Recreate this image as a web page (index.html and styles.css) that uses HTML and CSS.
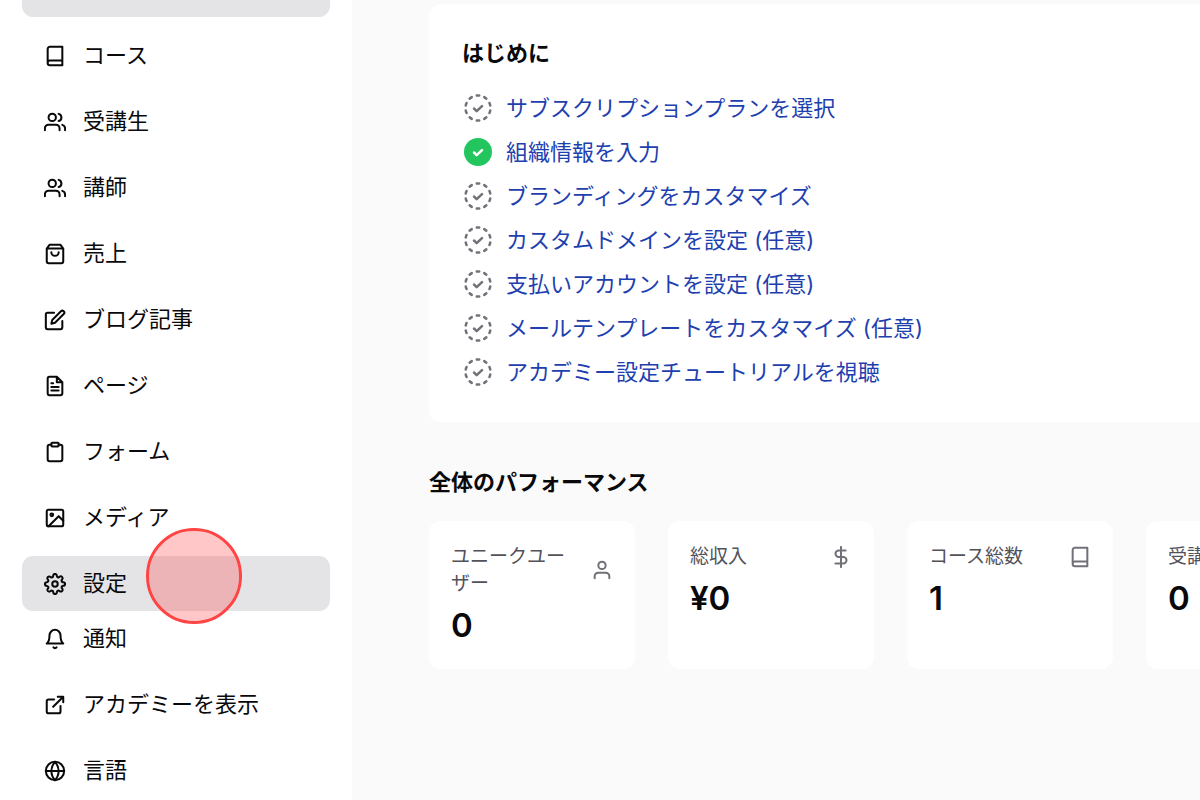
FILE: index.html
```html
<!DOCTYPE html>
<html lang="ja">
  <head>
    <meta charset="UTF-8" />
    <meta name="viewport" content="width=device-width, initial-scale=1.0" />
    <title>ダッシュボード</title>
    <link rel="stylesheet" href="styles.css">
  </head>
  <body>
    <!-- shared icons -->
    <svg class="sprite" aria-hidden="true">
      <symbol id="book" viewBox="0 0 24 24"><path d="M4 19.5v-15A2.5 2.5 0 0 1 6.5 2H20v20H6.5a2.5 2.5 0 0 1 0-5H20" /></symbol>
      <symbol id="users" viewBox="0 0 24 24"><path d="M17 21v-2a4 4 0 0 0-4-4H5a4 4 0 0 0-4 4v2M23 21v-2a4 4 0 0 0-3-3.87M16 3.13a4 4 0 0 1 0 7.75" /><circle cx="9" cy="7" r="4" /></symbol>
      <symbol id="todo" viewBox="0 0 28 28"><circle class="todo-ring" cx="14" cy="14" r="12.5" pathLength="120" /><path d="M10 14.5l2.7 2.6 5.3-5" /></symbol>
      <symbol id="done" viewBox="0 0 28 28"><circle class="done-disc" cx="14" cy="14" r="14" /><path d="M10 14.5l2.7 2.6 5.3-5" /></symbol>
    </svg>

    <div class="layout">
      <aside class="sidebar">
        <nav>
          <div class="nav-current"></div>
          <ul class="nav-list">
            <li><a class="nav-item" href="#"><svg class="icon"><use href="#book" /></svg>コース</a></li>
            <li><a class="nav-item" href="#"><svg class="icon"><use href="#users" /></svg>受講生</a></li>
            <li><a class="nav-item" href="#"><svg class="icon"><use href="#users" /></svg>講師</a></li>
            <li><a class="nav-item" href="#"><svg class="icon" viewBox="0 0 24 24"><path d="M6 2 3 6v14a2 2 0 0 0 2 2h14a2 2 0 0 0 2-2V6l-3-4ZM3 6h18M16 10a4 4 0 0 1-8 0" /></svg>売上</a></li>
            <li><a class="nav-item" href="#"><svg class="icon" viewBox="0 0 24 24"><path d="M11 4H4a2 2 0 0 0-2 2v14a2 2 0 0 0 2 2h14a2 2 0 0 0 2-2v-7" /><path d="M18.5 2.5a2.12 2.12 0 0 1 3 3L12 15l-4 1 1-4 9.5-9.5z" /></svg>ブログ記事</a></li>
            <li><a class="nav-item" href="#"><svg class="icon" viewBox="0 0 24 24"><path d="M14 2H6a2 2 0 0 0-2 2v16a2 2 0 0 0 2 2h12a2 2 0 0 0 2-2V8ZM14 2v6h6M10 9H8M16 13H8M16 17H8" /></svg>ページ</a></li>
            <li><a class="nav-item" href="#"><svg class="icon" viewBox="0 0 24 24"><rect x="8" y="2" width="8" height="4" rx="1" /><path d="M16 4h2a2 2 0 0 1 2 2v14a2 2 0 0 1-2 2H6a2 2 0 0 1-2-2V6a2 2 0 0 1 2-2h2" /></svg>フォーム</a></li>
            <li><a class="nav-item" href="#"><svg class="icon" viewBox="0 0 24 24"><rect x="3" y="3" width="18" height="18" rx="2" /><circle cx="8.5" cy="8.5" r="1.5" /><path d="M21 15l-5-5L5 21" /></svg>メディア</a></li>
            <li class="nav-target">
              <a class="nav-item active" href="#"><svg class="icon" viewBox="0 0 24 24"><circle cx="12" cy="12" r="3" /><path d="M19.4 15a1.65 1.65 0 0 0 .33 1.82l.06.06a2 2 0 0 1 0 2.83 2 2 0 0 1-2.83 0l-.06-.06a1.65 1.65 0 0 0-1.82-.33 1.65 1.65 0 0 0-1 1.51V21a2 2 0 0 1-2 2 2 2 0 0 1-2-2v-.09A1.65 1.65 0 0 0 9 19.4a1.65 1.65 0 0 0-1.82.33l-.06.06a2 2 0 0 1-2.83 0 2 2 0 0 1 0-2.83l.06-.06a1.65 1.65 0 0 0 .33-1.82 1.65 1.65 0 0 0-1.51-1H3a2 2 0 0 1-2-2 2 2 0 0 1 2-2h.09A1.65 1.65 0 0 0 4.6 9a1.65 1.65 0 0 0-.33-1.82l-.06-.06a2 2 0 0 1 0-2.83 2 2 0 0 1 2.83 0l.06.06a1.65 1.65 0 0 0 1.82.33H9a1.65 1.65 0 0 0 1-1.51V3a2 2 0 0 1 2-2 2 2 0 0 1 2 2v.09a1.65 1.65 0 0 0 1 1.51 1.65 1.65 0 0 0 1.82-.33l.06-.06a2 2 0 0 1 2.83 0 2 2 0 0 1 0 2.83l-.06.06a1.65 1.65 0 0 0-.33 1.82V9a1.65 1.65 0 0 0 1.51 1H21a2 2 0 0 1 2 2 2 2 0 0 1-2 2h-.09a1.65 1.65 0 0 0-1.51 1z" /></svg>設定</a>
              <span class="click-marker"></span>
            </li>
          </ul>
          <ul class="nav-list">
            <li><a class="nav-item" href="#"><svg class="icon" viewBox="0 0 24 24"><path d="M18 8A6 6 0 0 0 6 8c0 7-3 9-3 9h18s-3-2-3-9M13.73 21a2 2 0 0 1-3.46 0" /></svg>通知</a></li>
            <li><a class="nav-item" href="#"><svg class="icon" viewBox="0 0 24 24"><path d="M15 3h6v6M10 14 21 3M18 13v6a2 2 0 0 1-2 2H5a2 2 0 0 1-2-2V8a2 2 0 0 1 2-2h6" /></svg>アカデミーを表示</a></li>
            <li><a class="nav-item" href="#"><svg class="icon" viewBox="0 0 24 24"><circle cx="12" cy="12" r="10" /><path d="M2 12h20M12 2a15.3 15.3 0 0 1 4 10 15.3 15.3 0 0 1-4 10 15.3 15.3 0 0 1-4-10 15.3 15.3 0 0 1 4-10z" /></svg>言語</a></li>
          </ul>
        </nav>
      </aside>

      <main class="main">
        <section class="card start">
          <h2>はじめに</h2>
          <ul class="steps">
            <li><svg class="step-icon"><use href="#todo" /></svg><a href="#">サブスクリプションプランを選択</a></li>
            <li><svg class="step-icon done"><use href="#done" /></svg><a href="#">組織情報を入力</a></li>
            <li><svg class="step-icon"><use href="#todo" /></svg><a href="#">ブランディングをカスタマイズ</a></li>
            <li><svg class="step-icon"><use href="#todo" /></svg><a href="#">カスタムドメインを設定 (任意)</a></li>
            <li><svg class="step-icon"><use href="#todo" /></svg><a href="#">支払いアカウントを設定 (任意)</a></li>
            <li><svg class="step-icon"><use href="#todo" /></svg><a href="#">メールテンプレートをカスタマイズ (任意)</a></li>
            <li><svg class="step-icon"><use href="#todo" /></svg><a href="#">アカデミー設定チュートリアルを視聴</a></li>
          </ul>
        </section>

        <section class="performance">
          <h2>全体のパフォーマンス</h2>
          <div class="stats">
            <div class="card stat">
              <div class="stat-head"><h3>ユニークユーザー</h3><svg class="icon" viewBox="0 0 24 24"><path d="M20 21v-2a4 4 0 0 0-4-4H8a4 4 0 0 0-4 4v2" /><circle cx="12" cy="7" r="4" /></svg></div>
              <p class="value">0</p>
            </div>
            <div class="card stat">
              <div class="stat-head"><h3>総収入</h3><svg class="icon" viewBox="0 0 24 24"><path d="M12 1v22M17 5H9.5a3.5 3.5 0 0 0 0 7h5a3.5 3.5 0 0 1 0 7H6" /></svg></div>
              <p class="value">¥0</p>
            </div>
            <div class="card stat">
              <div class="stat-head"><h3>コース総数</h3><svg class="icon"><use href="#book" /></svg></div>
              <p class="value">1</p>
            </div>
            <div class="card stat">
              <div class="stat-head"><h3>受講生</h3><svg class="icon"><use href="#users" /></svg></div>
              <p class="value">0</p>
            </div>
          </div>
        </section>
      </main>
    </div>
  </body>
</html>
```
FILE: styles.css
```css
* {
  box-sizing: border-box;
}

body {
  margin: 0;
  height: 100vh;
  overflow: hidden;
  font-family: Inter, 'Noto Sans CJK JP', sans-serif;
  font-size: 22px;
  line-height: 33px;
  background-color: #fafafa;
  color: #09090b;
}

h2,
h3,
p,
ul {
  margin: 0;
  padding: 0;
}

ul {
  list-style: none;
}

a {
  text-decoration: none;
}

h2 {
  font-size: 22px;
  font-weight: 600;
}

.sprite {
  position: absolute;
  width: 0;
  height: 0;
}

.icon {
  flex: none;
  width: 22px;
  height: 22px;
  fill: none;
  stroke: currentColor;
  stroke-width: 2.2;
  stroke-linecap: round;
  stroke-linejoin: round;
}

.layout {
  display: flex;
  height: 100%;
}

/* sidebar */
.sidebar {
  flex: none;
  width: 352px;
  padding: 0 22px;
  background-color: #fff;
}

.nav-current {
  height: 17px;
  margin-bottom: 11px;
  border-radius: 0 0 11px 11px;
  background-color: #e4e4e7;
}

.nav-list {
  display: flex;
  flex-direction: column;
  gap: 11px;
}

.nav-item {
  display: flex;
  align-items: center;
  gap: 17px;
  height: 55px;
  padding: 0 22px;
  border-radius: 11px;
  color: #09090b;
}

.nav-item.active {
  background-color: #e4e4e7;
}

.nav-target {
  position: relative;
}

.click-marker {
  position: absolute;
  top: -28px;
  left: 124px;
  width: 96px;
  height: 96px;
  border: 3px solid #ff4444;
  border-radius: 50%;
  background-color: rgba(255, 68, 68, 0.3);
  background-clip: padding-box;
}

/* main */
.main {
  flex: 1 0 auto;
  padding: 4px 0 0 77px;
}

.card {
  border-radius: 12px;
  background-color: #fff;
}

.start {
  padding: 33px 33px 28px;
}

.steps {
  margin-top: 16px;
}

.steps li {
  display: flex;
  align-items: center;
  gap: 14px;
  height: 44px;
  padding-left: 2px;
}

.steps a {
  color: #1e40af;
}

.step-icon {
  flex: none;
  width: 28px;
  height: 28px;
  fill: none;
  stroke: #71717a;
  stroke-width: 2.5;
  stroke-linecap: round;
  stroke-linejoin: round;
}

.step-icon.done {
  stroke: #fff;
}

.todo-ring {
  stroke-dasharray: 4 8;
  stroke-dashoffset: -4;
}

.done-disc {
  fill: #22c55e;
  stroke: none;
}

.performance {
  padding-top: 44px;
}

.stats {
  display: grid;
  grid-template-columns: repeat(4, 206px);
  gap: 33px;
  margin-top: 22px;
}

.stat {
  padding: 22px;
  min-height: 148px;
}

.stat-head {
  display: flex;
  align-items: center;
  justify-content: space-between;
  gap: 22px;
  margin-bottom: 6px;
  color: #71717a;
}

h3 {
  font-size: 19px;
  font-weight: 400;
  line-height: 27px;
  color: #52525b;
}

.value {
  font-size: 33px;
  font-weight: 600;
  line-height: 44px;
}
```
